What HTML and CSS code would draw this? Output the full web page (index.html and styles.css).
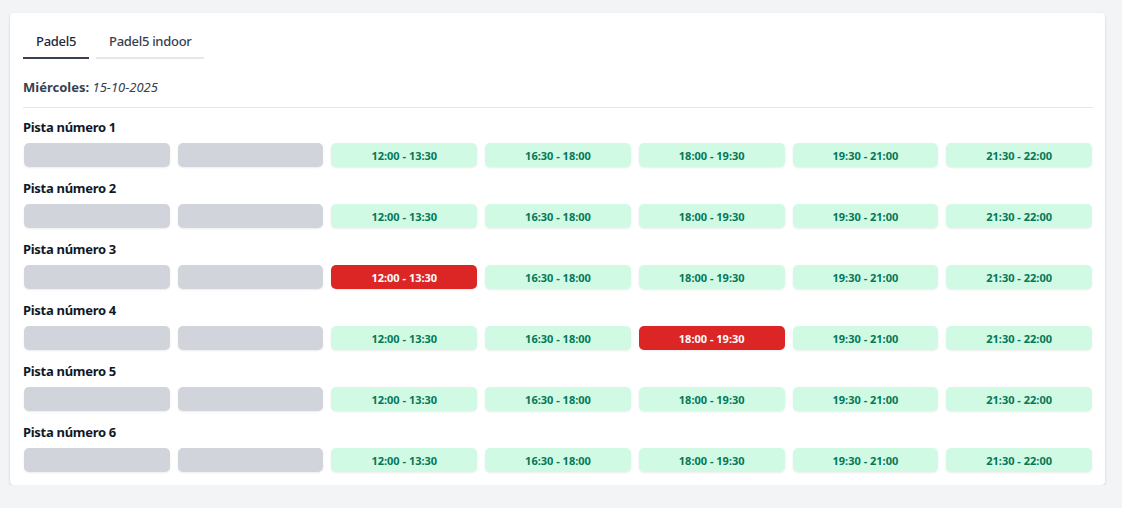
FILE: index.html
```html
<!DOCTYPE html>
<html lang="es">
<head>
<meta charset="utf-8">
<link rel="stylesheet" href="styles.css">
</head>
<body>
<div class="card">
  <div class="tabs">
    <div class="tab active">Padel5</div>
    <div class="tab">Padel5 indoor</div>
  </div>
  <div class="date"><span class="day">Miércoles:</span> <em>15-10-2025</em></div>
  <div class="courts">
    <div class="court">
      <div class="court-name">Pista número 1</div>
      <div class="slots">
        <div class="slot off"></div><div class="slot off"></div>
        <div class="slot free">12:00 - 13:30</div><div class="slot free">16:30 - 18:00</div><div class="slot free">18:00 - 19:30</div><div class="slot free">19:30 - 21:00</div><div class="slot free">21:30 - 22:00</div>
      </div>
    </div>
    <div class="court">
      <div class="court-name">Pista número 2</div>
      <div class="slots">
        <div class="slot off"></div><div class="slot off"></div>
        <div class="slot free">12:00 - 13:30</div><div class="slot free">16:30 - 18:00</div><div class="slot free">18:00 - 19:30</div><div class="slot free">19:30 - 21:00</div><div class="slot free">21:30 - 22:00</div>
      </div>
    </div>
    <div class="court">
      <div class="court-name">Pista número 3</div>
      <div class="slots">
        <div class="slot off"></div><div class="slot off"></div>
        <div class="slot busy">12:00 - 13:30</div><div class="slot free">16:30 - 18:00</div><div class="slot free">18:00 - 19:30</div><div class="slot free">19:30 - 21:00</div><div class="slot free">21:30 - 22:00</div>
      </div>
    </div>
    <div class="court">
      <div class="court-name">Pista número 4</div>
      <div class="slots">
        <div class="slot off"></div><div class="slot off"></div>
        <div class="slot free">12:00 - 13:30</div><div class="slot free">16:30 - 18:00</div><div class="slot busy">18:00 - 19:30</div><div class="slot free">19:30 - 21:00</div><div class="slot free">21:30 - 22:00</div>
      </div>
    </div>
    <div class="court">
      <div class="court-name">Pista número 5</div>
      <div class="slots">
        <div class="slot off"></div><div class="slot off"></div>
        <div class="slot free">12:00 - 13:30</div><div class="slot free">16:30 - 18:00</div><div class="slot free">18:00 - 19:30</div><div class="slot free">19:30 - 21:00</div><div class="slot free">21:30 - 22:00</div>
      </div>
    </div>
    <div class="court">
      <div class="court-name">Pista número 6</div>
      <div class="slots">
        <div class="slot off"></div><div class="slot off"></div>
        <div class="slot free">12:00 - 13:30</div><div class="slot free">16:30 - 18:00</div><div class="slot free">18:00 - 19:30</div><div class="slot free">19:30 - 21:00</div><div class="slot free">21:30 - 22:00</div>
      </div>
    </div>
  </div>
</div>
</body>
</html>
```
FILE: styles.css
```css
* { box-sizing: border-box; }
html, body { margin: 0; padding: 0; }
body {
  background: #f3f4f6;
  font-family: "Noto Sans", "Open Sans", sans-serif;
  color: #1f2937;
  padding: 13px 0 0 10px;
}
.card {
  width: 1095px;
  background: #fff;
  border-radius: 4px;
  box-shadow: 0 1px 3px rgba(0,0,0,0.12), 0 1px 2px rgba(0,0,0,0.06);
  padding: 12px 12px 13px 13px;
}
.tabs {
  display: flex;
  gap: 7px;
}
.tab {
  padding: 8px 13px;
  line-height: 16px;
  font-size: 13px;
  font-weight: 500;
  letter-spacing: -0.3px;
  color: #374151;
  border-bottom: 2px solid #e5e7eb;
}
.tab.active {
  color: #1f2937;
  border-bottom-color: #374151;
}
.date {
  margin-top: 18px;
  font-size: 13px;
  line-height: 20px;
  color: #374151;
  padding-bottom: 10px;
  border-bottom: 1px solid #e5e7eb;
}
.date .day { font-weight: 700; }
.date em { font-style: italic; }
.courts {
  display: flex;
  flex-direction: column;
  gap: 11px;
  padding-top: 9px;
}
.court-name {
  font-size: 13px;
  font-weight: 700;
  line-height: 20px;
  letter-spacing: -0.3px;
  color: #111827;
  margin-bottom: 6px;
}
.slots {
  display: grid;
  grid-template-columns: repeat(7, 1fr);
  gap: 8px;
  padding: 0 1px;
}
.slot {
  height: 24px;
  border-radius: 5px;
  display: flex;
  align-items: center;
  justify-content: center;
  font-size: 11px;
  font-weight: 700;
  box-shadow: 0 1px 2px rgba(0,0,0,0.08);
}
.slot.off { background: #d1d5db; }
.slot.free { background: #d1fae5; color: #047857; }
.slot.busy { background: #dc2626; color: #fff; }
```
